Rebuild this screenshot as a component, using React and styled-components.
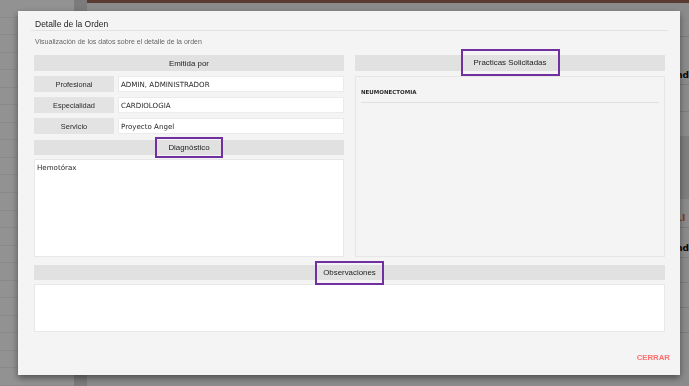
import React from 'react';
import styled, { createGlobalStyle } from 'styled-components';

const GlobalStyle = createGlobalStyle`
  html, body {
    margin: 0;
    padding: 0;
    width: 100%;
    height: 100%;
    overflow: hidden;
    font-family: "Liberation Sans", Arial, sans-serif;
  }
`;

/* page behind the dialog */

const Page = styled.div`
  display: flex;
  width: 100vw;
  height: 100vh;
  background: #e6e6e6;
`;

const Sidebar = styled.div`
  width: 75px;
  background: #fbfbfb;
  display: flex;
  flex-direction: column;
`;

const SideItem = styled.div`
  height: 17px;
  border-bottom: 1px solid #ededed;
`;

const Gutter = styled.div`
  width: 13px;
  background: #d4d4d4;
`;

const Main = styled.div`
  flex: 1;
  display: flex;
  flex-direction: column;
  background: #f0f0f0;
`;

const TopBar = styled.div`
  height: 3px;
  background: #9a6254;
`;

const Row = styled.div`
  height: ${(p) => p.$h}px;
  display: grid;
  grid-template-columns: 589px 1fr;
  align-items: end;
  padding-bottom: 4px;
  box-sizing: border-box;
  border-bottom: 1px solid #d8d8d8;
  background: ${(p) => (p.$band ? '#dadada' : 'transparent')};
`;

const Cell = styled.div`
  grid-column: 2;
  font-family: "DejaVu Sans", sans-serif;
  font-size: 9px;
  font-weight: bold;
  color: ${(p) => (p.$warn ? '#e06a3c' : '#111')};
  white-space: nowrap;
`;

const Overlay = styled.div`
  position: fixed;
  inset: 0;
  background: rgba(0, 0, 0, 0.42);
  padding: 11px 9px 0 18px;
`;

/* dialog */

const Modal = styled.div`
  width: 662px;
  height: 364px;
  box-sizing: border-box;
  background: #f4f4f4;
  padding: 0 12px 0 13px;
  box-shadow: 0 3px 7px rgba(0, 0, 0, 0.45);
  display: flex;
  flex-direction: column;
`;

const Title = styled.div`
  padding: 7px 0 0 4px;
  line-height: 12px;
  font-size: 8.5px;
  color: #1e1e1e;
  border-bottom: 1px solid #e2e2e2;
`;

const Subtitle = styled.div`
  margin-top: 6px;
  padding-left: 4px;
  line-height: 9px;
  font-size: 7px;
  color: #666;
`;

const Body = styled.div`
  padding: 0 3px;
  margin-top: 9px;
`;

const Columns = styled.div`
  display: grid;
  grid-template-columns: 1fr 1fr;
  gap: 11px;
`;

const Column = styled.div`
  display: flex;
  flex-direction: column;
`;

const SectionHeader = styled.div`
  height: ${(p) => p.$h}px;
  margin-top: ${(p) => p.$mt || 0}px;
  background: #e1e1e1;
  display: flex;
  align-items: center;
  justify-content: center;
  font-size: 7.9px;
  color: #222;
`;

const Highlight = styled.span`
  box-sizing: border-box;
  width: ${(p) => p.$w}px;
  height: ${(p) => p.$h}px;
  flex-shrink: 0;
  border: 2px solid #7030a0;
  display: flex;
  align-items: center;
  justify-content: center;
  position: relative;
  top: ${(p) => p.$dy || 0}px;
`;

const FieldRow = styled.div`
  display: grid;
  grid-template-columns: 80px 1fr;
  gap: 4px;
  height: 16px;
  margin-top: 5px;
`;

const Label = styled.div`
  background: #e3e3e3;
  display: flex;
  align-items: center;
  justify-content: center;
  font-size: 7.4px;
  color: #2a2a2a;
`;

const Value = styled.div`
  background: #fff;
  border: 1px solid #ebebeb;
  display: flex;
  align-items: center;
  padding-left: 2px;
  font-family: "DejaVu Sans", sans-serif;
  font-size: 7.1px;
  color: #2a2a2a;
`;

const TextBox = styled.div`
  height: ${(p) => p.$h}px;
  margin-top: 4px;
  box-sizing: border-box;
  background: #fff;
  border: 1px solid #e8e8e8;
  padding: 3px 2px;
  font-family: "DejaVu Sans", sans-serif;
  font-size: 7.1px;
  line-height: 9px;
  color: #2a2a2a;
`;

const Panel = styled.div`
  height: 181px;
  margin-top: 5px;
  box-sizing: border-box;
  border: 1px solid #e6e6e6;
  background: #f4f4f4;
  padding: 11px 5px 0 5px;
`;

const Practice = styled.div`
  line-height: 8px;
  padding-bottom: 6px;
  border-bottom: 1px solid #e0e0e0;
  font-family: "DejaVu Sans", sans-serif;
  font-size: 5.5px;
  font-weight: 600;
  color: #2a2a2a;
`;

const Footer = styled.div`
  display: flex;
  justify-content: flex-end;
  margin-top: 21px;
  margin-right: -2px;
`;

const CloseButton = styled.button`
  border: none;
  background: none;
  padding: 0;
  line-height: 10px;
  font-family: "Liberation Sans", Arial, sans-serif;
  font-size: 7.8px;
  font-weight: bold;
  color: #ff6e6e;
  cursor: pointer;
`;

const bgRows = [
  { h: 34 },
  { h: 48, text: 'nd' },
  { h: 27 },
  { h: 25 },
  { h: 62, band: true },
  { h: 29, text: 'LI', warn: true },
  { h: 30, text: 'nd' },
  { h: 25 },
  { h: 25 },
  { h: 25 },
];

const fields = [
  ['Profesional', 'ADMIN, ADMINISTRADOR'],
  ['Especialidad', 'CARDIOLOGIA'],
  ['Servicio', 'Proyecto Angel'],
];

export default function App() {
  return (
    <>
      <GlobalStyle />
      <Page>
        <Sidebar>
          {Array.from({ length: 22 }).map((_, i) => (
            <SideItem key={i} />
          ))}
        </Sidebar>
        <Gutter />
        <Main>
          <TopBar />
          {bgRows.map((r, i) => (
            <Row key={i} $h={r.h} $band={r.band}>
              {r.text && <Cell $warn={r.warn}>{r.text}</Cell>}
            </Row>
          ))}
        </Main>
      </Page>

      <Overlay>
        <Modal>
          <Title>Detalle de la Orden</Title>
          <Subtitle>Visualización de los datos sobre el detalle de la orden</Subtitle>

          <Body>
            <Columns>
              <Column>
                <SectionHeader $h={16}>Emitida por</SectionHeader>
                {fields.map(([label, value]) => (
                  <FieldRow key={label}>
                    <Label>{label}</Label>
                    <Value>{value}</Value>
                  </FieldRow>
                ))}
                <SectionHeader $h={15} $mt={6}>
                  <Highlight $w={68} $h={21}>Diagnóstico</Highlight>
                </SectionHeader>
                <TextBox $h={98}>Hemotórax</TextBox>
              </Column>

              <Column>
                <SectionHeader $h={16}>
                  <Highlight $w={99} $h={27} $dy={-1}>Practicas Solicitadas</Highlight>
                </SectionHeader>
                <Panel>
                  <Practice>NEUMONECTOMIA</Practice>
                </Panel>
              </Column>
            </Columns>

            <SectionHeader $h={15} $mt={8}>
              <Highlight $w={69} $h={24}>Observaciones</Highlight>
            </SectionHeader>
            <TextBox $h={48} />
          </Body>

          <Footer>
            <CloseButton>CERRAR</CloseButton>
          </Footer>
        </Modal>
      </Overlay>
    </>
  );
}
